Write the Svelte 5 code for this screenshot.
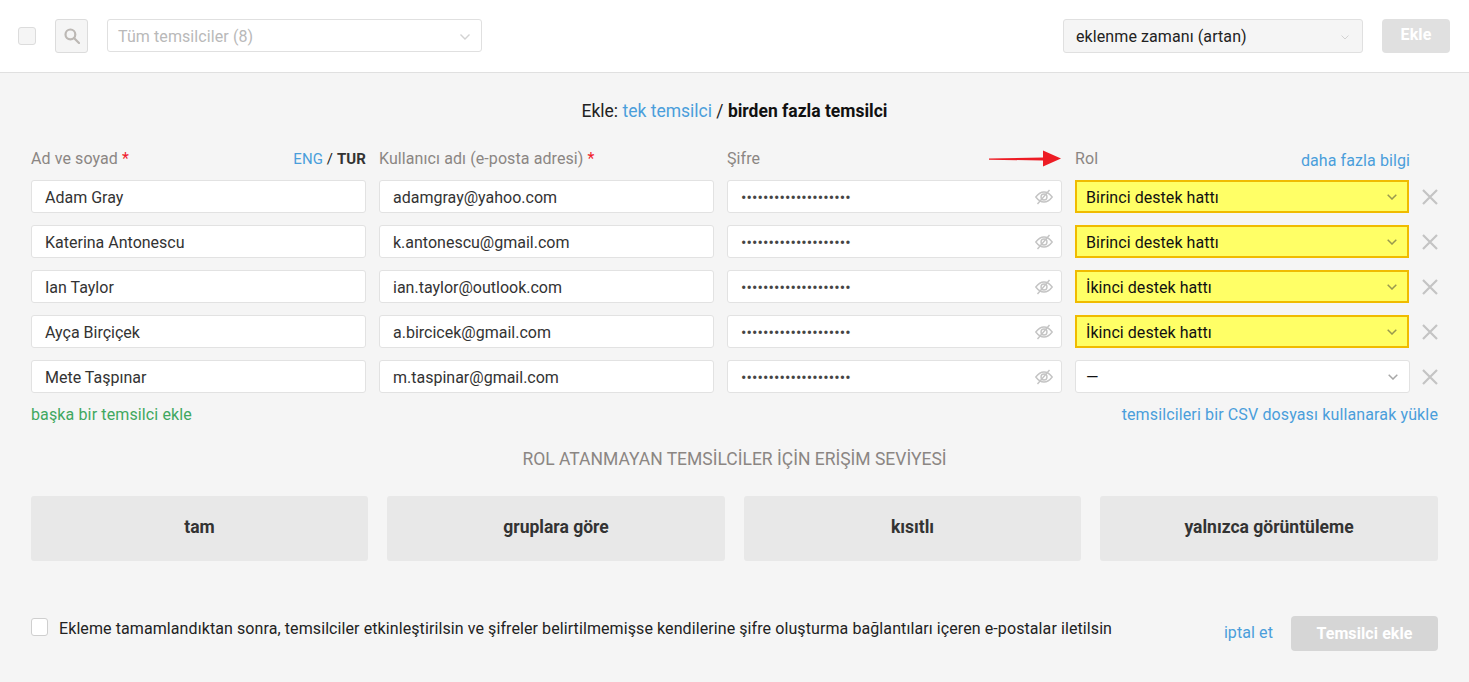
<script>
  const rows = [
    { name: "Adam Gray", email: "adamgray@yahoo.com", role: "Birinci destek hattı", hl: true },
    { name: "Katerina Antonescu", email: "k.antonescu@gmail.com", role: "Birinci destek hattı", hl: true },
    { name: "Ian Taylor", email: "ian.taylor@outlook.com", role: "İkinci destek hattı", hl: true },
    { name: "Ayça Birçiçek", email: "a.bircicek@gmail.com", role: "İkinci destek hattı", hl: true },
    { name: "Mete Taşpınar", email: "m.taspinar@gmail.com", role: "—", hl: false }
  ];
  const levels = ["tam", "gruplara göre", "kısıtlı", "yalnızca görüntüleme"];
  const dots = "••••••••••••••••••••";
</script>

<header class="topbar">
  <span class="check top-check"></span>
  <button class="search" aria-label="Ara">
    <svg width="16" height="16" viewBox="0 0 16 16" fill="none" stroke="#bcb8b4" stroke-width="2.2">
      <circle cx="6.4" cy="6.4" r="4.9" />
      <path d="M10 10l5 5" stroke-linecap="round" />
    </svg>
  </button>
  <div class="select filter">
    <span>Tüm temsilciler (8)</span>
    <svg width="10" height="6" viewBox="0 0 10 6" fill="none" stroke="#d2d2d2" stroke-width="1.4"><path d="M.5.5L5 5 9.500.5" /></svg>
  </div>
  <div class="spacer"></div>
  <div class="select sort">
    <span>eklenme zamanı (artan)</span>
    <svg width="8" height="5" viewBox="0 0 8 5" fill="none" stroke="#d2d2d2" stroke-width="1"><path d="M.5.5L4 4 7.500.5" /></svg>
  </div>
  <button class="add-top">Ekle</button>
</header>

<main class="content">
  <div class="title">
    Ekle: <span class="link">tek temsilci</span> / <b>birden fazla temsilci</b>
  </div>

  <div class="grid labels">
    <div class="label between">
      <span>Ad ve soyad <i>*</i></span>
      <span class="lang"><span class="link">ENG</span> <em>/</em> <b>TUR</b></span>
    </div>
    <div class="label">Kullanıcı adı (e-posta adresi) <i>*</i></div>
    <div class="label">Şifre</div>
    <div class="label between role-label">
      <svg class="arrow" width="72" height="17" viewBox="0 0 72 17">
        <path d="M0 8.500L54 7.500V10.500L0 9.700Z" fill="#ed1c24" />
        <path d="M54 .5L72 8.500L54 16.500Z" fill="#ed1c24" />
      </svg>
      <span>Rol</span>
      <span class="link more">daha fazla bilgi</span>
    </div>
  </div>

  {#each rows as r}
    <div class="grid row">
      <div class="field">{r.name}</div>
      <div class="field">{r.email}</div>
      <div class="field pass">
        <span class="dots">{dots}</span>
        <svg class="eye" width="18" height="16" viewBox="0 0 18 16" fill="none" stroke="#c4c4c4" stroke-width="1.400">
          <path d="M.8 8C3.600 4.300 6.200 3 9 3s5.400 1.300 8.200 5c-2.800 3.700-5.400 5-8.200 5S3.600 11.700.8 8z" />
          <circle cx="9" cy="8" r="3" />
          <path d="M2.500 15L14.500 1" />
        </svg>
      </div>
      <div class="field role" class:hl={r.hl}>
        <span>{r.role}</span>
        <svg width="10" height="6" viewBox="0 0 10 6" fill="none" stroke={r.hl ? "#99994f" : "#a8a8a8"} stroke-width="1.500"><path d="M.7.7L5 5 9.300.7" /></svg>
      </div>
      <button class="remove" aria-label="Sil">
        <svg width="16" height="16" viewBox="0 0 16 16" stroke="#c4c4c4" stroke-width="2.200"><path d="M1 1l14 14M15 1L1 15" /></svg>
      </button>
    </div>
  {/each}

  <div class="under">
    <span class="green">başka bir temsilci ekle</span>
    <span class="link">temsilcileri bir CSV dosyası kullanarak yükle</span>
  </div>

  <h2>ROL ATANMAYAN TEMSİLCİLER İÇİN ERİŞİM SEVİYESİ</h2>

  <div class="levels">
    {#each levels as l}
      <button class="level">{l}</button>
    {/each}
  </div>

  <div class="footer">
    <span class="check foot-check"></span>
    <span class="note">Ekleme tamamlandıktan sonra, temsilciler etkinleştirilsin ve şifreler belirtilmemişse kendilerine şifre oluşturma bağlantıları içeren e-postalar iletilsin</span>
    <span class="link cancel">iptal et</span>
    <button class="submit">Temsilci ekle</button>
  </div>
</main>

<style>
  :global(body) {
    background: #f5f5f5;
    font-family: Roboto, "Liberation Sans", sans-serif;
    font-size: 16px;
    letter-spacing: 0.09px;
    color: #222;
  }
  button {
    font-family: inherit;
    letter-spacing: inherit;
    border: 0;
    padding: 0;
  }
  .topbar {
    display: flex;
    align-items: center;
    height: 73px;
    box-sizing: border-box;
    padding: 0 19px 0 18px;
    background: #fff;
    border-bottom: 1px solid #e0e0e0;
  }
  .check {
    display: block;
    box-sizing: border-box;
    border: 1px solid #dcdcdc;
    border-radius: 3px;
  }
  .top-check {
    width: 18px;
    height: 18px;
    background: #f5f5f5;
  }
  .search {
    display: flex;
    align-items: center;
    justify-content: center;
    box-sizing: border-box;
    width: 33px;
    height: 34px;
    margin-left: 19px;
    background: #f5f5f5;
    border: 1px solid #dcdcdc;
    border-radius: 3px;
  }
  .select {
    display: flex;
    align-items: center;
    justify-content: space-between;
    box-sizing: border-box;
    border: 1px solid #e0e0e0;
    border-radius: 3px;
    font-size: 16px;
  }
  .filter {
    width: 375px;
    height: 33px;
    margin: -1px 0 0 19px;
    padding: 2px 11px 0 10px;
    color: #b9b9b9;
  }
  .sort {
    width: 300px;
    height: 34px;
    padding: 0 13px 0 12px;
    background: #f5f5f5;
    color: #222;
  }
  .sort svg {
    margin-top: 2px;
  }
  .spacer {
    flex: 1;
  }
  .add-top {
    width: 68px;
    height: 34px;
    margin-left: 19px;
    padding-bottom: 3px;
    background: #e0e0e0;
    color: #fff;
    border-radius: 4px;
    font-size: 16px;
    font-weight: 700;
  }
  .content {
    padding: 0 31px;
  }
  .title {
    margin-top: 27px;
    height: 22px;
    line-height: 22px;
    text-align: center;
    font-size: 17.500px;
    letter-spacing: 0;
    color: #222;
  }
  .title b {
    color: #111;
    font-weight: 700;
  }
  .link {
    color: #4a9edb;
  }
  .grid {
    display: grid;
    grid-template-columns: repeat(4, 335px) 15px;
    column-gap: 13px;
  }
  .labels {
    margin-top: 26px;
    height: 22px;
  }
  .label {
    position: relative;
    color: #8b8683;
    font-size: 16px;
    line-height: 22px;
  }
  .between {
    display: flex;
    justify-content: space-between;
  }
  .label i {
    color: #f01c2c;
    font-style: normal;
  }
  .lang {
    font-size: 15px;
  }
  .lang em {
    color: #222;
    font-style: normal;
  }
  .lang b {
    color: #333;
  }
  .more {
    margin-top: 2px;
  }
  .arrow {
    position: absolute;
    left: -86px;
    top: 2px;
  }
  .row {
    margin-top: 12px;
    height: 33px;
    align-items: stretch;
  }
  .labels + .row {
    margin-top: 10px;
  }
  .field {
    display: flex;
    align-items: center;
    justify-content: space-between;
    box-sizing: border-box;
    padding: 2px 13px 0;
    background: #fff;
    border: 1px solid #e2e2e2;
    border-radius: 3px;
    font-size: 16px;
    letter-spacing: 0;
    color: #333;
  }
  .field svg {
    margin-top: -2px;
  }
  .pass {
    padding-right: 8px;
  }
  .dots {
    font-size: 16px;
    letter-spacing: 0.09px;
    color: #444;
  }
  .role {
    padding: 2px 11px 0 10px;
    letter-spacing: 0.05px;
    color: #111;
  }
  .hl {
    background: #ffff66;
    border: 2px solid #f0bb00;
    border-radius: 0;
    margin-right: 1px;
    padding: 2px 10px 0 9px;
  }
  .remove {
    display: flex;
    align-items: center;
    margin-left: -1px;
    background: none;
  }
  .under {
    display: flex;
    justify-content: space-between;
    margin-top: 12px;
    line-height: 20px;
    font-size: 16px;
    letter-spacing: 0.13px;
  }
  .green {
    color: #3fa860;
  }
  h2 {
    margin: 22px 0 0;
    height: 24px;
    line-height: 24px;
    text-align: center;
    font-size: 17.500px;
    font-weight: 400;
    letter-spacing: 0;
    color: #8b8683;
  }
  .levels {
    display: grid;
    grid-template-columns: 337px 338px 337px 338px;
    column-gap: 19px;
    margin-top: 25px;
  }
  .level {
    height: 65px;
    padding-bottom: 3px;
    background: #e8e8e8;
    color: #333;
    border-radius: 3px;
    font-size: 17.500px;
    font-weight: 700;
    letter-spacing: 0;
  }
  .footer {
    display: flex;
    align-items: center;
    margin-top: 55px;
    height: 35px;
  }
  .foot-check {
    width: 17px;
    height: 18px;
    margin-top: -13px;
    background: #fff;
    border-color: #cfcfcf;
  }
  .note {
    margin-left: 11px;
    margin-top: -11px;
    font-size: 16px;
    color: #222;
    white-space: nowrap;
  }
  .cancel {
    margin-left: auto;
    margin-top: -2px;
  }
  .submit {
    width: 147px;
    height: 35px;
    margin-left: 18px;
    background: #d6d6d6;
    color: #fff;
    border-radius: 4px;
    font-size: 16px;
    font-weight: 700;
  }
</style>
